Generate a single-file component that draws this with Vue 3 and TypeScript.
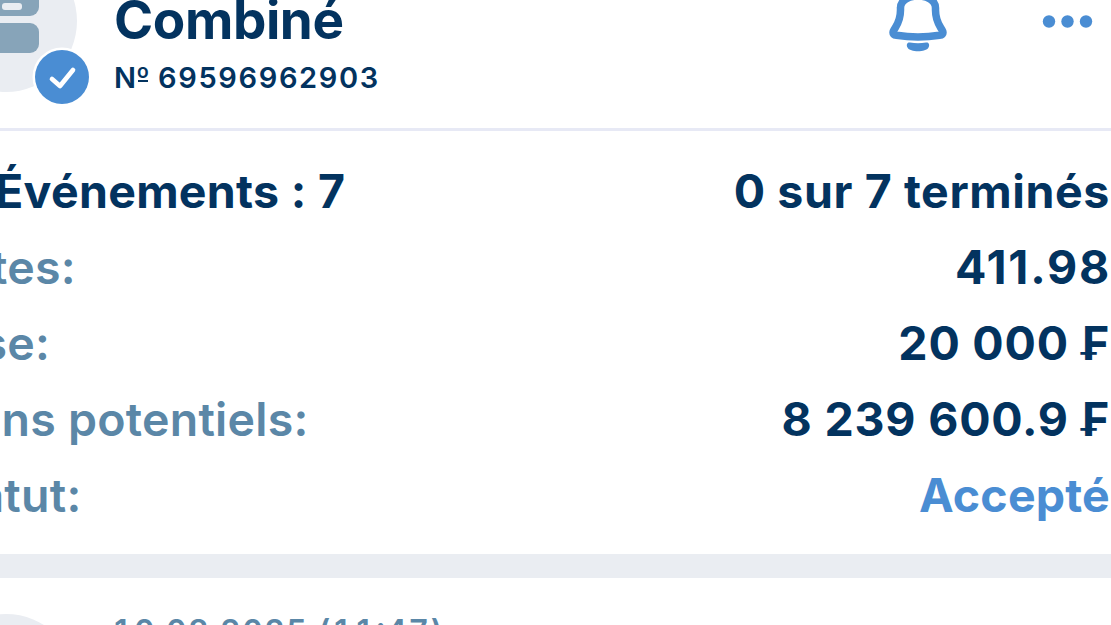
<script setup lang="ts">
interface Row {
  id: string
  label: string
  value: string
}

const rows: Row[] = [
  { id: 'events', label: 'Événements : 7', value: '0 sur 7 terminés' },
  { id: 'odds', label: 'Cotes:', value: '411.98' },
  { id: 'stake', label: 'Mise:', value: '20 000 ₣' },
  { id: 'gains', label: 'Gains potentiels:', value: '8 239 600.9 ₣' },
  { id: 'status', label: 'Statut:', value: 'Accepté' },
]
</script>

<template>
  <main class="screen">
    <header class="header">
      <svg class="avatar" width="92" height="110" viewBox="0 0 92 110" aria-hidden="true">
        <circle cx="6" cy="21" r="71" fill="#eaedf2" />
        <rect x="-30" y="-14" width="69" height="30" rx="9" fill="#87a4b9" />
        <rect x="2" y="3" width="20" height="7" rx="3" fill="#eaedf2" />
        <rect x="-30" y="23" width="69" height="30" rx="9" fill="#87a4b9" />
        <circle cx="62" cy="77" r="29.5" fill="#fff" />
        <circle cx="62" cy="77" r="27" fill="#4a8dd3" />
        <path d="M52 79l8 7 13-16" fill="none" stroke="#fff" stroke-width="4.7" stroke-linecap="round" stroke-linejoin="round" />
      </svg>
      <div class="heading">
        <h1 class="title">Combiné</h1>
        <p class="number">N<span class="ordinal">º</span> <span class="digits">69596962903</span></p>
      </div>
      <svg class="actions" width="231" height="60" viewBox="0 0 231 60" aria-hidden="true">
        <path d="M20.500 7V10C20.500 23 15 27 13.200 31.500C12.500 34 14 35 16.500 35.300C30 37.500 46 37.500 59.500 35.300C62 35 63.500 34 62.800 31.500C61 27 55.500 23 55.500 10V8C55.500-8 20.500-8 20.500 8" fill="none" stroke="#4a8dd3" stroke-width="7.500" stroke-linejoin="round" />
        <path d="M30 42.500Q38 44 46 42.500C49 42 50 45 48.500 47.500C46 52.500 30 52.500 27.500 47.500C26 45 27 42 30 42.500Z" fill="#4a8dd3" />
        <circle cx="169" cy="21.500" r="6.200" fill="#4a8dd3" />
        <circle cx="187.500" cy="21.500" r="6.200" fill="#4a8dd3" />
        <circle cx="206" cy="21.500" r="6.200" fill="#4a8dd3" />
      </svg>
    </header>
    <section class="details">
      <div v-for="row in rows" :key="row.id" class="row" :class="row.id">
        <span class="label">{{ row.label }}</span>
        <span class="value">{{ row.value }}</span>
      </div>
    </section>
    <div class="separator"></div>
    <section class="event">
      <svg class="event-avatar" width="92" height="47" viewBox="0 0 92 47" aria-hidden="true">
        <circle cx="6" cy="107" r="71" fill="#eaedf2" />
      </svg>
      <time class="date">10.08.2025 (11<span class="colon">:</span>47)</time>
    </section>
  </main>
</template>

<style>
body {
  margin: 0;
  overflow: hidden;
}
</style>

<style scoped>
.screen {
  width: 1111px;
  height: 625px;
  overflow: hidden;
  background: #fff;
  color: #03335f;
  font-family: Inter, 'Liberation Sans', sans-serif;
}
.header {
  display: flex;
  box-sizing: border-box;
  height: 131px;
  border-bottom: 3px solid #e7e9f5;
}
.avatar,
.event-avatar {
  flex: none;
}
.heading {
  flex: 1;
  padding-left: 22px;
  white-space: nowrap;
}
.title {
  margin: -10px 0 0;
  font-size: 53px;
  line-height: 60px;
  font-weight: 700;
  letter-spacing: -0.4px;
}
.number {
  margin: 10px 0 0;
  font-size: 29px;
  line-height: 36px;
  font-weight: 600;
}
.ordinal {
  position: relative;
  margin-right: 1px;
}
.ordinal::after {
  content: '';
  position: absolute;
  left: 2px;
  right: 2px;
  top: 20px;
  height: 2px;
  background: currentColor;
}
.digits {
  letter-spacing: 1.65px;
}
.actions {
  flex: none;
}
.details {
  display: grid;
  grid-auto-rows: 76.1px;
  box-sizing: border-box;
  height: 423px;
  padding: 22px 1px 0 0;
}
.row {
  display: flex;
  justify-content: space-between;
  line-height: 76px;
  font-size: 46.5px;
  font-weight: 700;
  font-feature-settings: 'calt' 0;
  white-space: nowrap;
}
.label {
  margin-left: -73px;
  color: #5b87a7;
  font-weight: 600;
  letter-spacing: 0.25px;
}
.odds .label {
  margin-left: -72px;
}
.stake .label {
  margin-left: -74px;
}
.status .label {
  margin-left: -70px;
}
.events .label {
  margin-left: -5px;
  color: inherit;
  font-weight: 700;
  letter-spacing: 0.3px;
}
.events .value {
  letter-spacing: 0.6px;
}
.odds .value {
  margin-right: -1px;
  letter-spacing: 1.8px;
}
.stake .value,
.gains .value {
  letter-spacing: 0.8px;
}
.status .value {
  color: #4a8dd3;
  letter-spacing: 0.2px;
}
.separator {
  height: 24px;
  background: #eaedf2;
}
.event {
  display: flex;
  height: 47px;
}
.date {
  padding: 35.5px 0 0 20px;
  color: #5b87a7;
  font-size: 32px;
  line-height: 36px;
  font-weight: 600;
  font-feature-settings: 'tnum' 1;
  letter-spacing: 1.35px;
  white-space: nowrap;
}
.colon {
  position: relative;
  top: -3px;
}
</style>
